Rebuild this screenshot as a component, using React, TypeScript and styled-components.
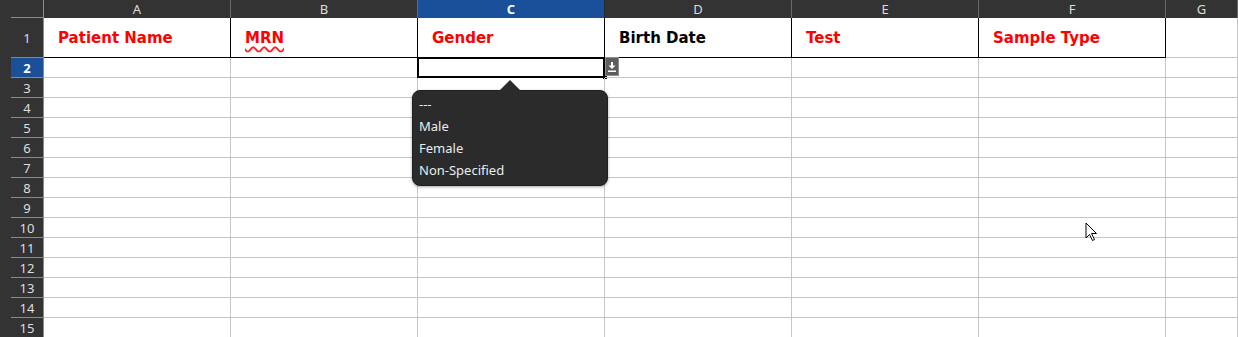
import React from "react";
import styled, { createGlobalStyle, css } from "styled-components";

const Global = createGlobalStyle`
  html, body { margin: 0; padding: 0; background: #ffffff; }
  #root { width: 1238px; height: 337px; }
`;

const COL_W = 187;
const HEAD_BG = "#333333";
const HEAD_LINE = "#8a8a8a";
const GRID = "#c6c6c6";
const SEL = "#1a4f9a";

const Sheet = styled.div`
  position: relative;
  width: 1238px;
  height: 337px;
  overflow: hidden;
  background: #fff;
  font-family: "Noto Sans", "DejaVu Sans", sans-serif;
`;

const Row = styled.div<{ $h: number }>`
  display: flex;
  height: ${(p) => p.$h}px;
`;

const HeaderBar = styled.div`
  display: flex;
  height: 18px;
  background: ${HEAD_BG};
`;

const Corner = styled.div`
  position: relative;
  width: 44px;
  flex: none;
  box-sizing: border-box;
  border-right: 1px solid ${HEAD_LINE};
  &::after {
    content: "";
    position: absolute;
    left: 11px;
    right: 0;
    bottom: 0;
    height: 1px;
    background: ${HEAD_LINE};
  }
`;

const ColHead = styled.div<{ $sel?: boolean; $grow?: boolean }>`
  width: ${COL_W}px;
  flex: ${(p) => (p.$grow ? "1" : "none")};
  box-sizing: border-box;
  border-right: 1px solid ${(p) => (p.$sel ? "#2c2c2c" : "#6a6a6a")};
  display: flex;
  align-items: center;
  justify-content: center;
  font-size: 13px;
  color: #dcdcdc;
  ${(p) =>
    p.$sel &&
    css`
      background: ${SEL};
      color: #ffffff;
      font-weight: 700;
    `}
`;

const RowHead = styled.div`
  width: 44px;
  flex: none;
  box-sizing: border-box;
  background: ${HEAD_BG};
  border-right: 1px solid ${HEAD_LINE};
  padding-left: 11px;
  display: flex;
`;

const RowLabel = styled.div<{ $sel?: boolean }>`
  flex: 1;
  display: flex;
  align-items: center;
  justify-content: center;
  border-bottom: 1px solid ${HEAD_LINE};
  font-size: 13px;
  color: #dedede;
  ${(p) =>
    p.$sel &&
    css`
      background: ${SEL};
      color: #ffffff;
      font-weight: 700;
    `}
`;

const Cell = styled.div<{ $dark?: boolean; $grow?: boolean }>`
  position: relative;
  width: ${COL_W}px;
  flex: ${(p) => (p.$grow ? "1" : "none")};
  box-sizing: border-box;
  border-right: 1px solid ${(p) => (p.$dark ? "#000" : GRID)};
  border-bottom: 1px solid ${(p) => (p.$dark ? "#000" : GRID)};
  display: flex;
  align-items: center;
  padding-left: 14px;
`;

const Title = styled.span<{ $red?: boolean; $spell?: boolean }>`
  font-family: "DejaVu Sans", sans-serif;
  font-weight: 700;
  font-size: 15px;
  color: ${(p) => (p.$red ? "#ff0000" : "#000000")};
  white-space: nowrap;
  ${(p) =>
    p.$spell &&
    css`
      text-decoration: underline wavy #ff2020;
      text-decoration-thickness: 1.5px;
      text-underline-offset: 3px;
    `}
`;

const Selection = styled.div`
  position: absolute;
  top: -1px;
  left: -1px;
  right: -1px;
  bottom: -1px;
  border: 2px solid #000;
  pointer-events: none;
`;

const FillHandle = styled.div`
  position: absolute;
  right: -3px;
  bottom: -2px;
  width: 4px;
  height: 4px;
  background: #000;
`;

const DropButton = styled.div`
  position: absolute;
  left: 187px;
  top: -1px;
  width: 14px;
  height: 19px;
  box-sizing: border-box;
  background: #5e5e5e;
  border: 1px solid #8e8e8e;
  display: flex;
  align-items: center;
  justify-content: center;
  z-index: 2;
`;

const Popup = styled.div`
  position: absolute;
  left: 412px;
  top: 90px;
  width: 196px;
  height: 96px;
  box-sizing: border-box;
  background: #2b2b2b;
  border: 1px solid #1f1f1f;
  border-radius: 8px;
  box-shadow: 0 1px 3px rgba(0, 0, 0, 0.35);
  padding: 2px 0 0 6px;
  display: flex;
  flex-direction: column;
  z-index: 5;
`;

const Arrow = styled.div`
  position: absolute;
  left: 86px;
  top: -11px;
  width: 0;
  height: 0;
  border-left: 11px solid transparent;
  border-right: 11px solid transparent;
  border-bottom: 11px solid #2b2b2b;
`;

const Item = styled.div`
  height: 22px;
  line-height: 22px;
  font-size: 13px;
  color: #ececec;
  font-family: "Noto Sans", sans-serif;
`;

const Cursor = styled.svg`
  position: absolute;
  left: 1085px;
  top: 222px;
  z-index: 10;
`;

const cols = ["A", "B", "C", "D", "E", "F"];
const headers: { t: string; red: boolean; spell?: boolean }[] = [
  { t: "Patient Name", red: true },
  { t: "MRN", red: true, spell: true },
  { t: "Gender", red: true },
  { t: "Birth Date", red: false },
  { t: "Test", red: true },
  { t: "Sample Type", red: true },
];

export default function App() {
  const rows = Array.from({ length: 13 }, (_, i) => i + 3);
  return (
    <>
      <Global />
      <Sheet>
        <HeaderBar>
          <Corner />
          {cols.map((c) => (
            <ColHead key={c} $sel={c === "C"}>
              {c}
            </ColHead>
          ))}
          <ColHead $grow>G</ColHead>
        </HeaderBar>

        <Row $h={40}>
          <RowHead>
            <RowLabel>1</RowLabel>
          </RowHead>
          {headers.map((h) => (
            <Cell key={h.t} $dark>
              <Title $red={h.red} $spell={h.spell}>
                {h.t}
              </Title>
            </Cell>
          ))}
          <Cell $grow />
        </Row>

        <Row $h={20}>
          <RowHead>
            <RowLabel $sel>2</RowLabel>
          </RowHead>
          {cols.map((c) => (
            <Cell key={c}>
              {c === "C" && (
                <>
                  <Selection />
                  <FillHandle />
                  <DropButton>
                    <svg width="8" height="10" viewBox="0 0 8 10">
                      <rect x="3" y="0" width="2" height="4" fill="#fff" />
                      <path d="M0.5 3.5 H7.5 L4 7 Z" fill="#fff" />
                      <rect x="0" y="8.5" width="8" height="1.5" fill="#fff" />
                    </svg>
                  </DropButton>
                </>
              )}
            </Cell>
          ))}
          <Cell $grow />
        </Row>

        {rows.map((r) => (
          <Row key={r} $h={20}>
            <RowHead>
              <RowLabel>{r}</RowLabel>
            </RowHead>
            {cols.map((c) => (
              <Cell key={c} />
            ))}
            <Cell $grow />
          </Row>
        ))}

        <Popup>
          <Arrow />
          <Item>---</Item>
          <Item>Male</Item>
          <Item>Female</Item>
          <Item>Non-Specified</Item>
        </Popup>

        <Cursor width="14" height="20" viewBox="0 0 14 20">
          <path
            d="M1 1 L1 16 L4.5 12.5 L7.5 18.5 L9.5 17.5 L6.5 11.5 L11.5 11.5 Z"
            fill="#ffffff"
            stroke="#000000"
            strokeWidth="1"
            strokeLinejoin="round"
          />
        </Cursor>
      </Sheet>
    </>
  );
}
